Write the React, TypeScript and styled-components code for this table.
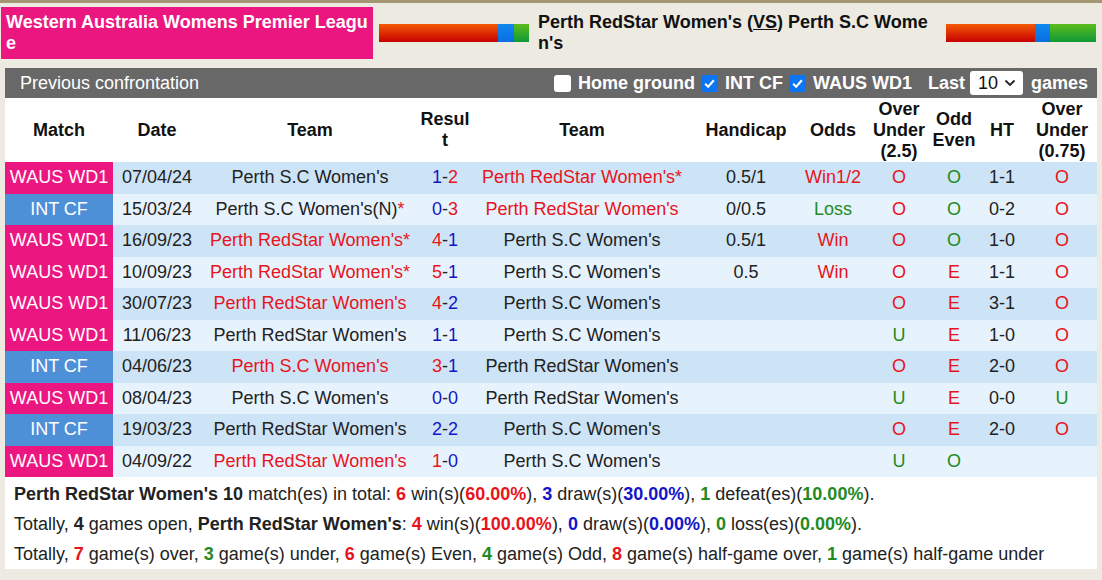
import React from 'react'
import styled, { createGlobalStyle } from 'styled-components'

type Tone = 'red' | 'blue' | 'green' | 'black'

const toneColor: Record<Tone, string> = {
  red: '#e8141c',
  blue: '#1414c8',
  green: '#238a23',
  black: '#222',
}

const GlobalStyle = createGlobalStyle`
  body {
    margin: 0;
    background: #eceae1;
    font-family: 'Liberation Sans', Arial, sans-serif;
    color: #222;
  }
`

const PageStyled = styled.div`
  border-top: 3px solid #a39673;
  padding: 4px 5px 12px 1px;
`

const HeaderStyled = styled.div`
  display: flex;
  align-items: center;
  height: 52px;
`

const LeagueStyled = styled.div`
  box-sizing: border-box;
  width: 372px;
  height: 52px;
  padding: 5px 5px;
  background: #ec1680;
  color: #fff;
  font-size: 18px;
  font-weight: 700;
  line-height: 21px;
  word-break: break-all;
`

const BarStyled = styled.div<{ $gap: number }>`
  display: flex;
  width: 150px;
  height: 18px;
  margin-left: ${props => props.$gap}px;
`

const BarPartStyled = styled.div<{ $kind: 'win' | 'draw' | 'loss'; $width: number }>`
  width: ${props => props.$width}px;
  background: ${props =>
    props.$kind === 'win'
      ? 'linear-gradient(#f25a05, #c80000)'
      : props.$kind === 'draw'
      ? 'linear-gradient(#1088f0, #0a6ee0)'
      : 'linear-gradient(#5cbc1c, #0f9a38)'};
`

const MatchTitleStyled = styled.div`
  box-sizing: border-box;
  width: 397px;
  height: 52px;
  margin-left: 9px;
  padding: 5px 0;
  color: #111;
  font-size: 18px;
  font-weight: 700;
  line-height: 21px;
  word-break: break-all;

  u {
    text-decoration: underline;
  }
`

const PanelStyled = styled.div`
  width: 1092px;
  margin: 9px 0 0 4px;
`

const ToolbarStyled = styled.div`
  display: flex;
  align-items: center;
  height: 30px;
  padding: 0 9px 0 15px;
  background: #686868;
  color: #fff;
  font-size: 18px;
`

const FiltersStyled = styled.div`
  display: flex;
  align-items: center;
  margin-left: auto;
  font-weight: 700;
`

const FilterStyled = styled.label<{ $space: number }>`
  display: flex;
  align-items: center;
  gap: 7px;
  margin-left: ${props => props.$space}px;
`

const CheckStyled = styled.span<{ $on: boolean }>`
  display: flex;
  flex-shrink: 0;
  align-items: center;
  justify-content: center;
  box-sizing: border-box;
  width: 17px;
  height: 17px;
  border-radius: 3px;
  background: ${props => (props.$on ? '#0b75f5' : '#fff')};
`

const SelectStyled = styled.span`
  display: flex;
  flex-shrink: 0;
  align-items: center;
  justify-content: space-between;
  box-sizing: border-box;
  width: 53px;
  height: 24px;
  margin: 0 8px 0 5px;
  padding: 0 7px 0 8px;
  border-radius: 3px;
  background: #fff;
  color: #111;
  font-weight: 400;
`

const columns = '108px 88px 218px 52px 222px 106px 68px 64px 46px 50px 70px'

const HeadRowStyled = styled.div`
  display: grid;
  grid-template-columns: ${columns};
  height: 64px;
  background: #fff;
  color: #111;
  font-size: 18px;
  font-weight: 700;
  line-height: 21px;
`

const HeadCellStyled = styled.div`
  display: flex;
  align-items: center;
  justify-content: center;
  text-align: center;
  word-break: break-all;
`

const RowStyled = styled.div<{ $odd: boolean }>`
  display: grid;
  grid-template-columns: ${columns};
  height: 31.5px;
  background: ${props => (props.$odd ? '#cde4f6' : '#e7f3fc')};
  font-size: 18px;
`

const CellStyled = styled.div<{ $tone?: Tone }>`
  display: flex;
  align-items: center;
  justify-content: center;
  white-space: nowrap;
  color: ${props => toneColor[props.$tone || 'black']};
`

const LeagueCellStyled = styled(CellStyled)<{ $kind: 'waus' | 'int' }>`
  background: ${props => (props.$kind === 'waus' ? '#ec1680' : '#4e90d8')};
  color: #fff;
`

const ToneStyled = styled.span<{ $tone: Tone; $bold?: boolean }>`
  color: ${props => toneColor[props.$tone]};
  font-weight: ${props => (props.$bold ? 700 : 400)};
`

const SummaryStyled = styled.div`
  padding: 2px 9px 0;
  background: #fff;
  color: #222;
  font-size: 18px;
  line-height: 30px;
`

type Side = { name: string; tone: Tone; star?: boolean }

type Match = {
  league: 'WAUS WD1' | 'INT CF'
  date: string
  home: Side
  score: [string, Tone, string, Tone]
  away: Side
  handicap: string
  odds: string
  oddsTone: Tone
  ou: string
  oe: string
  ht: string
  ou2: string
}

const RS = "Perth RedStar Women's"
const SC = "Perth S.C Women's"

const matches: Match[] = [
  { league: 'WAUS WD1', date: '07/04/24', home: { name: SC, tone: 'black' }, score: ['1', 'blue', '2', 'red'], away: { name: RS, tone: 'red', star: true }, handicap: '0.5/1', odds: 'Win1/2', oddsTone: 'red', ou: 'O', oe: 'O', ht: '1-1', ou2: 'O' },
  { league: 'INT CF', date: '15/03/24', home: { name: SC + '(N)', tone: 'black', star: true }, score: ['0', 'blue', '3', 'red'], away: { name: RS, tone: 'red' }, handicap: '0/0.5', odds: 'Loss', oddsTone: 'green', ou: 'O', oe: 'O', ht: '0-2', ou2: 'O' },
  { league: 'WAUS WD1', date: '16/09/23', home: { name: RS, tone: 'red', star: true }, score: ['4', 'red', '1', 'blue'], away: { name: SC, tone: 'black' }, handicap: '0.5/1', odds: 'Win', oddsTone: 'red', ou: 'O', oe: 'O', ht: '1-0', ou2: 'O' },
  { league: 'WAUS WD1', date: '10/09/23', home: { name: RS, tone: 'red', star: true }, score: ['5', 'red', '1', 'blue'], away: { name: SC, tone: 'black' }, handicap: '0.5', odds: 'Win', oddsTone: 'red', ou: 'O', oe: 'E', ht: '1-1', ou2: 'O' },
  { league: 'WAUS WD1', date: '30/07/23', home: { name: RS, tone: 'red' }, score: ['4', 'red', '2', 'blue'], away: { name: SC, tone: 'black' }, handicap: '', odds: '', oddsTone: 'black', ou: 'O', oe: 'E', ht: '3-1', ou2: 'O' },
  { league: 'WAUS WD1', date: '11/06/23', home: { name: RS, tone: 'black' }, score: ['1', 'blue', '1', 'blue'], away: { name: SC, tone: 'black' }, handicap: '', odds: '', oddsTone: 'black', ou: 'U', oe: 'E', ht: '1-0', ou2: 'O' },
  { league: 'INT CF', date: '04/06/23', home: { name: SC, tone: 'red' }, score: ['3', 'red', '1', 'blue'], away: { name: RS, tone: 'black' }, handicap: '', odds: '', oddsTone: 'black', ou: 'O', oe: 'E', ht: '2-0', ou2: 'O' },
  { league: 'WAUS WD1', date: '08/04/23', home: { name: SC, tone: 'black' }, score: ['0', 'blue', '0', 'blue'], away: { name: RS, tone: 'black' }, handicap: '', odds: '', oddsTone: 'black', ou: 'U', oe: 'E', ht: '0-0', ou2: 'U' },
  { league: 'INT CF', date: '19/03/23', home: { name: RS, tone: 'black' }, score: ['2', 'blue', '2', 'blue'], away: { name: SC, tone: 'black' }, handicap: '', odds: '', oddsTone: 'black', ou: 'O', oe: 'E', ht: '2-0', ou2: 'O' },
  { league: 'WAUS WD1', date: '04/09/22', home: { name: RS, tone: 'red' }, score: ['1', 'red', '0', 'blue'], away: { name: SC, tone: 'black' }, handicap: '', odds: '', oddsTone: 'black', ou: 'U', oe: 'O', ht: '', ou2: '' },
]

const ouTone = (v: string): Tone => (v === 'O' ? 'red' : 'green')
const oeTone = (v: string): Tone => (v === 'O' ? 'green' : 'red')

function TeamCell({ side }: { side: Side }) {
  return (
    <CellStyled $tone={side.tone}>
      {side.name}
      {side.star && <ToneStyled $tone="red">*</ToneStyled>}
    </CellStyled>
  )
}

function CheckMark() {
  return (
    <svg width="13" height="13" viewBox="0 0 12 12">
      <path d="M2 6.3 L4.8 9 L10 3" fill="none" stroke="#fff" strokeWidth="2" />
    </svg>
  )
}

function Chevron() {
  return (
    <svg width="12" height="8" viewBox="0 0 12 8">
      <path d="M1.5 1.5 L6 6 L10.5 1.5" fill="none" stroke="#222" strokeWidth="1.8" />
    </svg>
  )
}

function B({ tone, children }: { tone: Tone; children: React.ReactNode }) {
  return (
    <ToneStyled $tone={tone} $bold>
      {children}
    </ToneStyled>
  )
}

function App() {
  return (
    <PageStyled>
      <GlobalStyle />
      <HeaderStyled>
        <LeagueStyled>Western Australia Womens Premier League</LeagueStyled>
        <BarStyled $gap={6}>
          <BarPartStyled $kind="win" $width={119} />
          <BarPartStyled $kind="draw" $width={16} />
          <BarPartStyled $kind="loss" $width={15} />
        </BarStyled>
        <MatchTitleStyled>
          Perth RedStar Women's (<u>VS</u>) Perth S.C Women's
        </MatchTitleStyled>
        <BarStyled $gap={11}>
          <BarPartStyled $kind="win" $width={89} />
          <BarPartStyled $kind="draw" $width={15} />
          <BarPartStyled $kind="loss" $width={46} />
        </BarStyled>
      </HeaderStyled>

      <PanelStyled>
        <ToolbarStyled>
          <span>Previous confrontation</span>
          <FiltersStyled>
            <FilterStyled $space={0}>
              <CheckStyled $on={false} />
              Home ground
            </FilterStyled>
            <FilterStyled $space={6}>
              <CheckStyled $on>
                <CheckMark />
              </CheckStyled>
              INT CF
            </FilterStyled>
            <FilterStyled $space={6}>
              <CheckStyled $on>
                <CheckMark />
              </CheckStyled>
              WAUS WD1
            </FilterStyled>
            <FilterStyled $space={16}>Last</FilterStyled>
            <SelectStyled>
              10
              <Chevron />
            </SelectStyled>
            <span>games</span>
          </FiltersStyled>
        </ToolbarStyled>

        <HeadRowStyled>
          <HeadCellStyled>Match</HeadCellStyled>
          <HeadCellStyled>Date</HeadCellStyled>
          <HeadCellStyled>Team</HeadCellStyled>
          <HeadCellStyled>Result</HeadCellStyled>
          <HeadCellStyled>Team</HeadCellStyled>
          <HeadCellStyled>Handicap</HeadCellStyled>
          <HeadCellStyled>Odds</HeadCellStyled>
          <HeadCellStyled>
            Over
            <br />
            Under
            <br />
            (2.5)
          </HeadCellStyled>
          <HeadCellStyled>
            Odd
            <br />
            Even
          </HeadCellStyled>
          <HeadCellStyled>HT</HeadCellStyled>
          <HeadCellStyled>
            Over
            <br />
            Under
            <br />
            (0.75)
          </HeadCellStyled>
        </HeadRowStyled>

        {matches.map((m, i) => (
          <RowStyled key={m.date} $odd={i % 2 === 0}>
            <LeagueCellStyled $kind={m.league === 'INT CF' ? 'int' : 'waus'}>{m.league}</LeagueCellStyled>
            <CellStyled>{m.date}</CellStyled>
            <TeamCell side={m.home} />
            <CellStyled>
              <ToneStyled $tone={m.score[1]}>{m.score[0]}</ToneStyled>-
              <ToneStyled $tone={m.score[3]}>{m.score[2]}</ToneStyled>
            </CellStyled>
            <TeamCell side={m.away} />
            <CellStyled>{m.handicap}</CellStyled>
            <CellStyled $tone={m.oddsTone}>{m.odds}</CellStyled>
            <CellStyled $tone={ouTone(m.ou)}>{m.ou}</CellStyled>
            <CellStyled $tone={oeTone(m.oe)}>{m.oe}</CellStyled>
            <CellStyled>{m.ht}</CellStyled>
            <CellStyled $tone={ouTone(m.ou2)}>{m.ou2}</CellStyled>
          </RowStyled>
        ))}

        <SummaryStyled>
          <div>
            <b>Perth RedStar Women's</b> <b>10</b> match(es) in total: <B tone="red">6</B> win(s)(
            <B tone="red">60.00%</B>), <B tone="blue">3</B> draw(s)(<B tone="blue">30.00%</B>),{' '}
            <B tone="green">1</B> defeat(es)(<B tone="green">10.00%</B>).
          </div>
          <div>
            Totally, <b>4</b> games open, <b>Perth RedStar Women's</b>: <B tone="red">4</B> win(s)(
            <B tone="red">100.00%</B>), <B tone="blue">0</B> draw(s)(<B tone="blue">0.00%</B>),{' '}
            <B tone="green">0</B> loss(es)(<B tone="green">0.00%</B>).
          </div>
          <div>
            Totally, <B tone="red">7</B> game(s) over, <B tone="green">3</B> game(s) under,{' '}
            <B tone="red">6</B> game(s) Even, <B tone="green">4</B> game(s) Odd, <B tone="red">8</B>{' '}
            game(s) half-game over, <B tone="green">1</B> game(s) half-game under
          </div>
        </SummaryStyled>
      </PanelStyled>
    </PageStyled>
  )
}

export default App
